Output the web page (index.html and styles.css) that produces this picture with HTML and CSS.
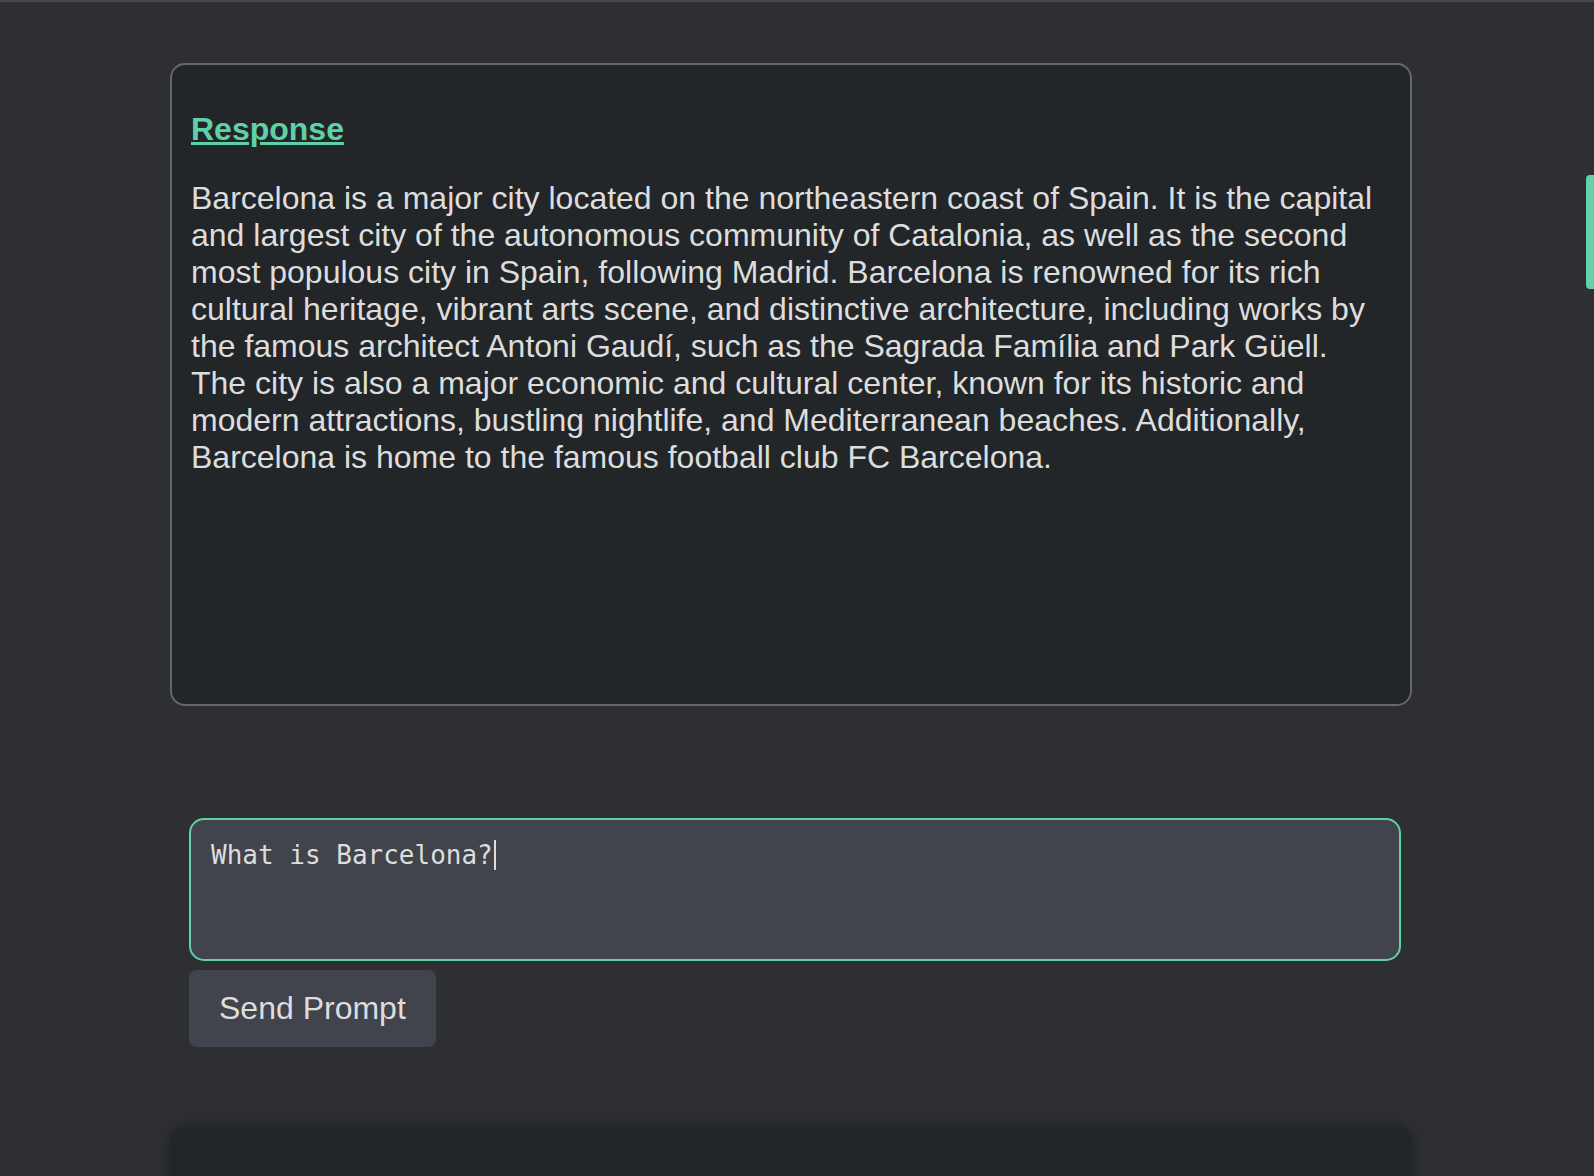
FILE: index.html
```html
<!DOCTYPE html>
<html lang="en">
<head>
<meta charset="utf-8">
<title>Response</title>
<link rel="stylesheet" href="styles.css">
</head>
<body>
<div class="topline"></div>
<main class="page">
  <section class="card response">
    <h2 class="title">Response</h2>
    <p class="answer">Barcelona is a major city located on the northeastern coast of Spain. It is the capital and largest city of the autonomous community of Catalonia, as well as the second most populous city in Spain, following Madrid. Barcelona is renowned for its rich cultural heritage, vibrant arts scene, and distinctive architecture, including works by the famous architect Antoni Gaudí, such as the Sagrada Família and Park Güell. The city is also a major economic and cultural center, known for its historic and modern attractions, bustling nightlife, and Mediterranean beaches. Additionally, Barcelona is home to the famous football club FC Barcelona.</p>
  </section>
  <form class="prompt">
    <div class="input">What is Barcelona?<span class="caret"></span></div>
    <button type="button" class="send">Send Prompt</button>
  </form>
  <section class="card lower"></section>
</main>
<div class="thumb"></div>
</body>
</html>
```
FILE: styles.css
```css
html, body {
  margin: 0;
  padding: 0;
  height: 100%;
  overflow: hidden;
}
body {
  background: #2e2f33;
  font-family: "Liberation Sans", Arial, sans-serif;
  color: #dddddd;
}
.topline {
  height: 2px;
  background: #45464a;
}
.page {
  width: 1242px;
  padding: 61px 0 0 170px;
}
.card {
  box-sizing: border-box;
  width: 1242px;
  border-radius: 15px;
  background: #232629;
}
.response {
  height: 643px;
  border: 2px solid #66676a;
  padding: 46px 20px 0 19px;
}
.title {
  margin: 0;
  font-size: 32px;
  line-height: 37px;
  font-weight: bold;
  color: #5fd1a7;
  text-decoration: underline;
}
.answer {
  margin: 32px 0 0 0;
  font-size: 32px;
  line-height: 37px;
  color: #dddddd;
}
.prompt {
  margin: 112px 0 0 19px;
  display: flex;
  flex-direction: column;
  align-items: flex-start;
  gap: 9px;
}
.input {
  box-sizing: border-box;
  width: 1212px;
  height: 143px;
  border: 2px solid #62d0a7;
  border-radius: 15px;
  background: #41444c;
  padding: 20px;
  font-family: "DejaVu Sans Mono", monospace;
  font-size: 26px;
  color: #dddddd;
}
.caret {
  display: inline-block;
  width: 2px;
  height: 30px;
  margin-left: 1px;
  background: #dddddd;
  vertical-align: -6px;
}
.send {
  border: none;
  border-radius: 8px;
  background: #41444c;
  color: #dddddd;
  font-family: "Liberation Sans", Arial, sans-serif;
  font-size: 32px;
  line-height: 37px;
  padding: 20px 30px;
}
.lower {
  margin-top: 80px;
  height: 300px;
  box-shadow: 0 0 12px rgba(0, 0, 0, 0.35);
}
.thumb {
  position: fixed;
  right: 0;
  top: 175px;
  width: 8px;
  height: 114px;
  border-radius: 4px 0 0 4px;
  background: #64d1a8;
}
```
